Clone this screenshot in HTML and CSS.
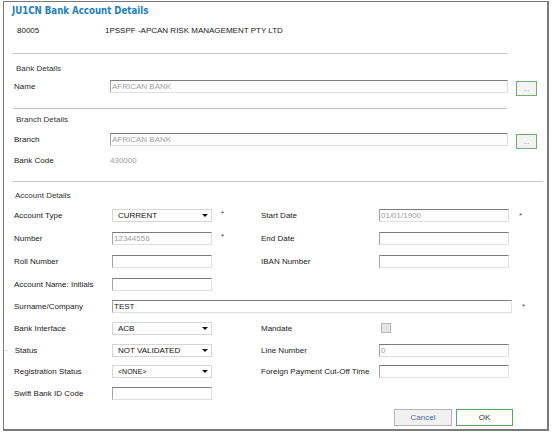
FILE: index.html
```html
<!DOCTYPE html>
<html lang="en">
<head>
    <meta charset="UTF-8">
    <title>JU1CN Bank Account Details</title>
    <link rel="stylesheet" href="styles.css">
</head>
<body>
    <div class="dialog">
        <div class="title">JU1CN Bank Account Details</div>
        <div class="header-row">
            <span class="code">80005</span>
            <span>1PSSPF -APCAN RISK MANAGEMENT PTY LTD</span>
        </div>

        <div class="rule rule-1"></div>
        <div class="section-title bank-title">Bank Details</div>
        <div class="lookup-row">
            <span class="label">Name</span>
            <div class="input disabled long">AFRICAN BANK</div>
            <button class="lookup">...</button>
        </div>

        <div class="rule rule-2"></div>
        <div class="section-title branch-title">Branch Details</div>
        <div class="lookup-row branch-row">
            <span class="label">Branch</span>
            <div class="input disabled long">AFRICAN BANK</div>
            <button class="lookup">...</button>
        </div>
        <div class="code-row">
            <span class="label">Bank Code</span>
            <span class="muted">430000</span>
        </div>

        <div class="rule rule-3"></div>
        <div class="section-title account-title">Account Details</div>

        <div class="account-grid">
            <span class="label">Account Type</span>
            <div class="cell"><div class="select"><span>CURRENT</span><i class="arrow"></i></div><span class="req">*</span></div>
            <span class="label">Start Date</span>
            <div class="cell"><div class="input disabled medium">01/01/1900</div><span class="req req-right">*</span></div>

            <span class="label">Number</span>
            <div class="cell"><div class="input disabled short">12344556</div><span class="req">*</span></div>
            <span class="label">End Date</span>
            <div class="cell"><div class="input medium"></div></div>

            <span class="label">Roll Number</span>
            <div class="cell"><div class="input short"></div></div>
            <span class="label">IBAN Number</span>
            <div class="cell"><div class="input medium"></div></div>

            <span class="label">Account Name: Initials</span>
            <div class="cell"><div class="input short"></div></div>
            <span></span>
            <span></span>

            <span class="label">Surname/Company</span>
            <div class="cell span-3"><div class="input surname">TEST</div><span class="req req-right">*</span></div>

            <span class="label">Bank Interface</span>
            <div class="cell"><div class="select"><span>ACB</span><i class="arrow"></i></div></div>
            <span class="label">Mandate</span>
            <div class="cell"><span class="checkbox"></span></div>

            <span class="label"><span class="dot">·</span>Status</span>
            <div class="cell"><div class="select"><span>NOT VALIDATED</span><i class="arrow"></i></div></div>
            <span class="label">Line Number</span>
            <div class="cell"><div class="input disabled medium">0</div></div>

            <span class="label">Registration Status</span>
            <div class="cell"><div class="select"><span class="small">&lt;NONE&gt;</span><i class="arrow"></i></div></div>
            <span class="label">Foreign Payment Cut-Off Time</span>
            <div class="cell"><div class="input medium"></div></div>

            <span class="label">Swift Bank ID Code</span>
            <div class="cell"><div class="input short"></div></div>
            <span></span>
            <span></span>
        </div>

        <div class="actions">
            <button class="btn cancel">Cancel</button>
            <button class="btn ok">OK</button>
        </div>
    </div>
</body>
</html>
```

FILE: styles.css
```css
body {
    margin: 0;
    background-color: #fff;
    font-family: "Liberation Sans", Arial, sans-serif;
    font-size: 8px;
    color: #222;
}

.dialog {
    box-sizing: border-box;
    width: 546px;
    height: 430px;
    margin: 1px 0 0 3px;
    border: 1px solid #7a7a7a;
    border-right-width: 2px;
    border-bottom-width: 2px;
    background-color: #fff;
}

.title {
    height: 18px;
    line-height: 18px;
    padding-left: 8px;
    font-family: "DejaVu Sans Condensed", "DejaVu Sans", Verdana, sans-serif;
    font-stretch: condensed;
    font-weight: bold;
    font-size: 9.6px;
    color: #2180c4;
}

.header-row {
    height: 22px;
    line-height: 22px;
    padding-left: 13px;
    display: flex;
}

.header-row .code {
    width: 88px;
}

.rule {
    height: 1px;
    margin-left: 9px;
    width: 494px;
    background-color: #c4c4c4;
}

.rule-1 { margin-top: 11px; }
.rule-2 { margin-top: 11px; }
.rule-3 { margin-top: 13px; width: 530px; }

.section-title {
    height: 14px;
    line-height: 14px;
    padding-left: 12px;
    color: #333;
}

.bank-title { margin-top: 8px; }
.branch-title { margin-top: 4px; }
.account-title { margin-top: 7px; padding-left: 11px; }

.label {
    color: #222;
    white-space: nowrap;
}

.lookup-row {
    display: flex;
    align-items: flex-start;
    height: 18px;
    margin-top: 3px;
    padding-left: 10px;
}

.branch-row {
    margin-top: 5px;
}

.lookup-row .label {
    width: 96px;
    line-height: 13px;
    margin-top: 1px;
}

.input {
    box-sizing: border-box;
    height: 13px;
    line-height: 11px;
    padding-left: 1px;
    border: 1px solid #e0e0e0;
    border-top-color: #7c7c7c;
    border-left-color: #a4a4a4;
    background-color: #fff;
    color: #222;
    white-space: nowrap;
    overflow: hidden;
}

.input.disabled {
    color: #a3a3a3;
    background-color: #fdfdfd;
}

.lookup-row .input {
    margin-top: 1px;
}

.input.long { width: 398px; }
.input.short { width: 100px; }
.input.medium { width: 130px; }
.input.surname { width: 400px; }

.lookup {
    box-sizing: border-box;
    width: 21px;
    height: 15px;
    margin: 2px 0 0 8px;
    padding: 0;
    border: 1px solid #6fae6f;
    background-color: #f3f3f3;
    color: #999;
    font-family: "Liberation Sans", Arial, sans-serif;
    font-size: 7px;
    line-height: 11px;
}

.code-row {
    display: flex;
    height: 14px;
    line-height: 14px;
    margin-top: 4px;
    padding-left: 10px;
}

.code-row .label {
    width: 96px;
}

.muted {
    color: #9a9a9a;
}

.account-grid {
    display: grid;
    grid-template-columns: 98px 149px 118px 1fr;
    grid-template-rows: 24px 23px 23px 23px 21px 22px 22px 21px 22px;
    align-items: center;
    padding-left: 10px;
}

.cell {
    display: flex;
    align-items: center;
}

.span-3 {
    grid-column: span 3;
}

.select {
    box-sizing: border-box;
    position: relative;
    width: 100px;
    height: 13px;
    padding-left: 5px;
    line-height: 11px;
    border: 1px solid #d6d6d6;
    background-color: #fff;
    color: #111;
}

.select .small {
    font-size: 7px;
}

.arrow {
    position: absolute;
    right: 3px;
    top: 4px;
    width: 0;
    height: 0;
    border-left: 3px solid transparent;
    border-right: 3px solid transparent;
    border-top: 3px solid #111;
}

.req {
    margin-left: 9px;
    margin-top: -4px;
    color: #444;
    font-size: 8px;
}

.req-right {
    margin-left: 10px;
    margin-top: 0;
}

.dot {
    margin-left: -9px;
    margin-right: 7px;
    color: #555;
}

.checkbox {
    box-sizing: border-box;
    width: 10px;
    height: 10px;
    margin-left: 2px;
    border: 1px solid #b8b8b8;
    background-color: #e6e6e6;
}

.actions {
    display: flex;
    justify-content: flex-end;
    gap: 4px;
    margin-top: 5px;
    padding-right: 34px;
}

.btn {
    box-sizing: border-box;
    height: 17px;
    padding: 0;
    font-family: "Liberation Sans", Arial, sans-serif;
    font-size: 8px;
    cursor: pointer;
}

.cancel {
    width: 58px;
    border: 1px solid #b5b5b5;
    background-color: #f1f1f1;
    color: #4a6c98;
}

.ok {
    width: 57px;
    border: 1px solid #5aa85a;
    background-color: #fff;
    color: #333;
}
```
